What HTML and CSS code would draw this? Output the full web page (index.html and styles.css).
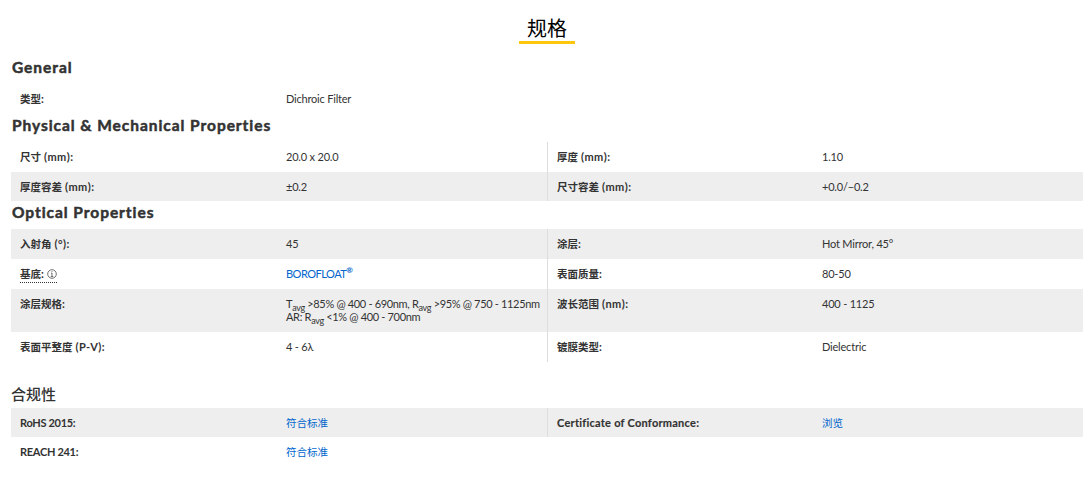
FILE: index.html
```html
<!DOCTYPE html>
<html lang="zh">
<head>
<meta charset="utf-8">
<title>规格</title>
<link rel="stylesheet" href="styles.css">
</head>
<body>
<main class="specs">
  <h2 class="title"><span class="title-text">规格</span></h2>

  <h3 class="group group-first">General</h3>
  <div class="grid">
    <div class="label row-29"><span class="cjk">类型</span>:</div><div class="value row-29">Dichroic Filter</div><div class="empty"></div><div class="empty"></div>
  </div>

  <h3 class="group group-phys">Physical &amp; Mechanical Properties</h3>
  <div class="grid">
    <div class="label row-30"><span class="cjk">尺寸</span> (mm):</div><div class="value row-30">20.0 x 20.0</div><div class="label second row-30"><span class="cjk">厚度</span> (mm):</div><div class="value row-30">1.10</div>
    <div class="label row-29 shade"><span class="cjk">厚度容差</span> (mm):</div><div class="value row-29 shade">±0.2</div><div class="label second row-29 shade"><span class="cjk">尺寸容差</span> (mm):</div><div class="value row-29 shade">+0.0/−0.2</div>
  </div>

  <h3 class="group group-opt">Optical Properties</h3>
  <div class="grid">
    <div class="label row-30 shade"><span class="cjk">入射角</span> (°):</div><div class="value row-30 shade">45</div><div class="label second row-30 shade"><span class="cjk">涂层</span>:</div><div class="value row-30 shade">Hot Mirror, 45°</div>
    <div class="label row-30"><span class="tip"><span class="cjk">基底</span>: <svg class="info" viewBox="0 0 10 10" aria-hidden="true"><circle cx="5" cy="5" r="4.3"/><path d="M5 4.2V7.6M3.7 7.6H6.3M3.9 4.2H5M5 2.2V3.1"/></svg></span></div><div class="value row-30"><a class="link latin-link" href="#">BOROFLOAT<sup>®</sup></a></div><div class="label second row-30"><span class="cjk">表面质量</span>:</div><div class="value row-30">80-50</div>
    <div class="label row-43 shade"><span class="cjk">涂层规格</span>:</div><div class="value row-43 shade long">T<sub>avg</sub> &gt;85% @ 400 - 690nm, R<sub>avg</sub> &gt;95% @ 750 - 1125nm<br>AR: R<sub>avg</sub> &lt;1% @ 400 - 700nm</div><div class="label second row-43 shade"><span class="cjk">波长范围</span> (nm):</div><div class="value row-43 shade">400 - 1125</div>
    <div class="label row-30"><span class="cjk">表面平整度</span> (P-V):</div><div class="value row-30">4 - 6λ</div><div class="label second row-30"><span class="cjk">镀膜类型</span>:</div><div class="value row-30">Dielectric</div>
  </div>

  <h3 class="group group-comp">合规性</h3>
  <div class="grid">
    <div class="label row-29 shade narrow">RoHS 2015:</div><div class="value row-29 shade"><a class="link cjk" href="#">符合标准</a></div><div class="label second row-29 shade wide">Certificate of Conformance:</div><div class="value row-29 shade"><a class="link cjk" href="#">浏览</a></div>
    <div class="label row-29 narrow">REACH 241:</div><div class="value row-29"><a class="link cjk" href="#">符合标准</a></div><div class="empty"></div><div class="empty"></div>
  </div>
</main>
</body>
</html>
```

FILE: styles.css
```css
* { box-sizing: border-box; }
html, body { margin: 0; padding: 0; background: #fff; }
body {
  width: 1086px;
  height: 486px;
  overflow: hidden;
  font-family: "Lato", "Noto Sans CJK SC", sans-serif;
  font-size: 11px;
  color: #333;
}
.specs { padding: 13px 3px 0 11px; }
.title {
  margin: 0;
  height: 31px;
  text-align: center;
  font-weight: 400;
  font-size: 20px;
  line-height: 30px;
  color: #000;
}
.title-text {
  display: inline-block;
  width: 56px;
  height: 31px;
  border-bottom: 3px solid #fcc70d;
}
.group {
  margin: 0;
  padding-left: 1px;
  font-size: 15.5px;
  font-weight: 700;
  letter-spacing: 0.95px;
  line-height: 20px;
  color: #333;
  -webkit-text-stroke: 0.5px #333;
}
.group-first { height: 40px; padding-top: 13px; }
.group-phys { height: 29px; padding-top: 2px; }
.group-opt { height: 28px; padding-top: 1px; }
.group-comp {
  height: 46px;
  padding-top: 22px;
  padding-left: 0;
  font-size: 15px;
  font-weight: 500;
  letter-spacing: 0;
  -webkit-text-stroke: 0;
}
.grid {
  display: grid;
  grid-template-columns: 266px 270px 266px 270px;
}
.label, .value {
  padding: 8px 9px 0;
  line-height: 13px;
  white-space: nowrap;
}
.label {
  font-weight: 700;
  letter-spacing: 0.4px;
}
.value { letter-spacing: -0.2px; }
.long { letter-spacing: -0.33px; }
.narrow { letter-spacing: -0.3px; }
.wide { letter-spacing: 0.25px; -webkit-text-stroke: 0.15px #333; }
.cjk { font-size: 10.5px; letter-spacing: 0; }
.second { border-left: 1px solid #ddd; }
.shade { background: #eee; }
.row-29 { height: 29px; }
.row-30 { height: 30px; }
.row-43 { height: 43px; }
.link { color: #0066cc; text-decoration: none; }
.latin-link { letter-spacing: -0.5px; }
sub, sup { font-size: 9px; line-height: 0; }
sup { font-size: 8px; font-weight: 700; }
.tip { border-bottom: 1px dotted #333; padding-bottom: 2px; }
.info {
  display: inline-block;
  width: 10px;
  height: 10px;
  vertical-align: -1px;
  fill: none;
  stroke: #333;
  stroke-width: 0.7;
}
```
